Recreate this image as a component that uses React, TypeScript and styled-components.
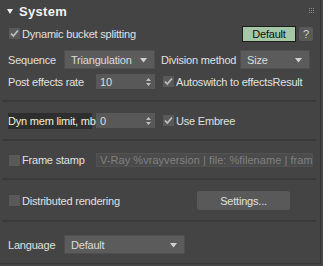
import styled, { createGlobalStyle } from "styled-components";

const Global = createGlobalStyle`
  html, body {
    margin: 0;
    padding: 0;
    background: #444444;
  }
  body {
    font-family: "Liberation Sans", Arial, sans-serif;
    font-size: 11px;
    letter-spacing: -0.2px;
    color: #dcdcdc;
  }
`;

function Check({ on }: { on?: boolean }) {
  return (
    <Box>
      {on && (
        <svg width="11" height="11" viewBox="0 0 11 11">
          <path d="M2 5.5 L4.3 8 L9 2.5" fill="none" stroke="#bdbdbd" strokeWidth="1.8" />
        </svg>
      )}
    </Box>
  );
}

function Arrow() {
  return (
    <svg width="7" height="5" viewBox="0 0 7 5">
      <path d="M0 0 H7 L3.5 4.5 Z" fill="#d0d0d0" />
    </svg>
  );
}

function Spin() {
  return (
    <svg width="5" height="10" viewBox="0 0 5 10">
      <path d="M0 4 L2.5 1 L5 4 Z M0 6 L2.5 9 L5 6 Z" fill="#bdbdbd" />
    </svg>
  );
}

export default function App() {
  return (
    <>
      <Global />
      <Panel>
        <Header>
          <svg width="6" height="5" viewBox="0 0 6 5">
            <path d="M0 0 H6 L3 5 Z" fill="#f0f0f0" />
          </svg>
          <Title>System</Title>
          <Grip>
            {Array.from({ length: 9 }).map((_, i) => (
              <span key={i} />
            ))}
          </Grip>
        </Header>

        <Group>
          <Row $h={17}>
            <CheckLabel>
              <Check on />
              Dynamic bucket splitting
            </CheckLabel>
            <Spacer />
            <GreenButton>Default</GreenButton>
            <HelpButton>?</HelpButton>
          </Row>
          <Row $h={19} $mt={8}>
            <Label $w={56}>Sequence</Label>
            <Select $w={91}>
              Triangulation
              <Arrow />
            </Select>
            <Label $w={79} $ml={6}>Division method</Label>
            <Select $w={70}>
              Size
              <Arrow />
            </Select>
          </Row>
          <Row $h={15} $mt={5}>
            <Label $w={88}>Post effects rate</Label>
            <Spinner>
              10
              <Spin />
            </Spinner>
            <CheckLabel $ml={7}>
              <Check on />
              Autoswitch to effectsResult
            </CheckLabel>
          </Row>
        </Group>

        <Separator />

        <Group $pt={11} $pb={11}>
          <Row $h={15}>
            <Label $w={88}>
              <Selected>Dyn mem limit, mb</Selected>
            </Label>
            <Spinner>
              0
              <Spin />
            </Spinner>
            <CheckLabel $ml={7}>
              <Check on />
              Use Embree
            </CheckLabel>
          </Row>
        </Group>

        <Separator />

        <Group $pt={12} $pb={11}>
          <Row $h={14}>
            <CheckLabel style={{ width: 88 }}>
              <Check />
              Frame stamp
            </CheckLabel>
            <StampField>V-Ray %vrayversion | file: %filename | frame: %frame</StampField>
          </Row>
        </Group>

        <Separator />

        <Group $pt={11} $pb={10}>
          <Row $h={19}>
            <CheckLabel style={{ width: 189 }}>
              <Check />
              Distributed rendering
            </CheckLabel>
            <Button>Settings...</Button>
          </Row>
        </Group>

        <Separator />

        <Group $pt={13} $pb={7}>
          <Row $h={19}>
            <Label $w={56}>Language</Label>
            <Select $w={121}>
              Default
              <Arrow />
            </Select>
          </Row>
        </Group>
      </Panel>
    </>
  );
}

const Panel = styled.div`
  width: 320px;
  height: 263px;
  border-right: 1px solid #363636;
  border-bottom: 1px solid #363636;
  display: flex;
  flex-direction: column;
`;

const Header = styled.div`
  height: 22px;
  display: flex;
  align-items: center;
  padding-left: 7px;
  padding-right: 6px;
`;

const Title = styled.div`
  font-weight: 700;
  font-size: 13px;
  color: #f2f2f2;
  margin-left: 6px;
  margin-top: 1px;
  letter-spacing: 0.3px;
`;

const Grip = styled.div`
  margin-left: auto;
  margin-top: -2px;
  display: grid;
  grid-template-columns: repeat(3, 1px);
  gap: 1px;
  span {
    width: 1px;
    height: 1px;
    background: #8a8a8a;
  }
`;

const Group = styled.div<{ $pt?: number; $pb?: number }>`
  padding: ${(p) => p.$pt ?? 3}px 0 ${(p) => p.$pb ?? 11}px 8px;
  display: flex;
  flex-direction: column;
`;

const Row = styled.div<{ $h: number; $mt?: number }>`
  height: ${(p) => p.$h}px;
  margin-top: ${(p) => p.$mt ?? 0}px;
  display: flex;
  align-items: center;
  width: 305px;
`;

const Spacer = styled.div`
  flex: 1;
`;

const Label = styled.div<{ $w: number; $ml?: number }>`
  width: ${(p) => p.$w}px;
  margin-left: ${(p) => p.$ml ?? 0}px;
  flex: none;
  white-space: nowrap;
  color: #e0e0e0;
`;

const Selected = styled.span`
  display: inline-block;
  background: #2e2e2e;
  color: #f4f0d8;
  padding: 2px 0 2px 0;
  width: 84px;
`;

const CheckLabel = styled.div<{ $ml?: number }>`
  display: flex;
  align-items: center;
  gap: 2px;
  margin-left: ${(p) => p.$ml ?? 0}px;
  white-space: nowrap;
  flex: none;
  color: #e0e0e0;
`;

const Box = styled.div`
  width: 11px;
  height: 11px;
  margin-left: 1px;
  background: #595959;
  display: flex;
`;

const Select = styled.div<{ $w: number }>`
  width: ${(p) => p.$w}px;
  height: 100%;
  flex: none;
  box-sizing: border-box;
  background: #5b5b5b;
  border: 1px solid #4e4e4e;
  display: flex;
  align-items: center;
  justify-content: space-between;
  padding: 1px 7px 0 6px;
  color: #dcdcdc;
`;

const Spinner = styled.div`
  width: 59px;
  height: 100%;
  flex: none;
  box-sizing: border-box;
  background: #585858;
  display: flex;
  align-items: center;
  justify-content: space-between;
  padding: 1px 4px 0 4px;
  color: #dcdcdc;
`;

const StampField = styled.div`
  width: 217px;
  height: 100%;
  flex: none;
  box-sizing: border-box;
  background: #4b4b4b;
  border: 1px solid #525252;
  color: #808080;
  white-space: nowrap;
  overflow: hidden;
  padding: 0 0 0 3px;
  display: flex;
  align-items: center;
  letter-spacing: 0.05px;
`;

const GreenButton = styled.div`
  width: 54px;
  height: 16px;
  box-sizing: border-box;
  background: #a6c7a6;
  border: 1px solid #1c1c1c;
  color: #111;
  display: flex;
  align-items: center;
  justify-content: center;
`;

const HelpButton = styled.div`
  width: 14px;
  height: 14px;
  margin-left: 3px;
  border-radius: 2px;
  background: #595959;
  color: #d0d0d0;
  display: flex;
  align-items: center;
  justify-content: center;
`;

const Button = styled.div`
  width: 93px;
  height: 100%;
  box-sizing: border-box;
  border-radius: 3px;
  background: #595959;
  color: #e0e0e0;
  display: flex;
  align-items: center;
  justify-content: center;
  flex: none;
`;

const Separator = styled.div`
  height: 2px;
  margin: 0 4px 0 2px;
  background: #3a3a3a;
`;
